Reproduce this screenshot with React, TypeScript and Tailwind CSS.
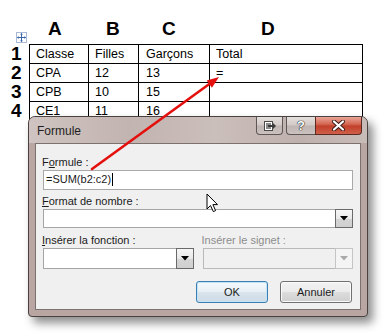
import React from "react";

function DropBtn({ disabled }: { disabled?: boolean }) {
  return (
    <div
      className={
        disabled
          ? "w-[18px] -my-px -mr-px flex items-center justify-center border border-[#c4c4c4] bg-[#f4f4f4]"
          : "w-[18px] -my-px -mr-px flex items-center justify-center border border-[#6a6a6a] bg-[linear-gradient(180deg,#f6f6f6_0%,#e9e9e9_50%,#d5d5d5_51%,#cfcfcf_100%)]"
      }
    >
      <svg width="8" height="5" viewBox="0 0 8 5">
        <path d="M0 0H8L4 4.5Z" fill={disabled ? "#a9a9a9" : "#000"} />
      </svg>
    </div>
  );
}

function Combo({ disabled, h }: { disabled?: boolean; h: string }) {
  return (
    <div
      className={
        (disabled ? "border-[#b9b9b9] bg-[#f0f0f0] " : "border-[#a5a5a5] bg-white ") +
        "flex justify-end border " +
        h
      }
    >
      <DropBtn disabled={disabled} />
    </div>
  );
}

export default function App() {
  const cols = "grid grid-cols-[59px_50px_71px_153px]";
  const rows = [
    ["Classe", "Filles", "Garçons", "Total"],
    ["CPA", "12", "13", "="],
    ["CPB", "10", "15", ""],
    ["CE1", "11", "16", ""],
  ];
  const pads = ["pl-[6px]", "pl-[6px]", "pl-[7px]", "pl-[6px]"];
  return (
    <div className="relative w-[387px] h-[335px] overflow-hidden bg-white text-black font-['Liberation_Sans',Arial,sans-serif]">
      {/* column letters */}
      <div className="flex h-[44px] pt-[19px]">
        <div className="w-[30px] shrink-0" />
        <div className={cols + " text-[19px] leading-[19px] font-bold"}>
          <div className="pl-[18px]">A</div>
          <div className="pl-[17px]">B</div>
          <div className="pl-[23px]">C</div>
          <div className="pl-[51px]">D</div>
        </div>
      </div>

      {/* table move handle */}
      <div className="absolute left-[16px] top-[32px] w-[11px] h-[11px] border border-[#a9b9d6] bg-white flex items-center justify-center">
        <svg width="9" height="9" viewBox="0 0 9 9">
          <path d="M4.5 0.5V8.5M0.5 4.5H8.5" stroke="#3a63a8" strokeWidth="1" />
          <path d="M4.5 0L3 1.6H6Z M4.5 9L3 7.4H6Z M0 4.5L1.6 3V6Z M9 4.5L7.4 3V6Z" fill="#3a63a8" />
        </svg>
      </div>

      {/* table with row numbers */}
      <div className="flex">
        <div className="w-[29px] shrink-0 text-[19px] leading-[19px] font-bold">
          {["1", "2", "3", "4"].map((n) => (
            <div key={n} className="h-[19px] pl-[11px]">
              {n}
            </div>
          ))}
        </div>
        <div className={cols + " border-l border-t border-black text-[12.5px] leading-[18px]"}>
          {rows.map((r, i) =>
            r.map((c, j) => (
              <div key={i + "-" + j} className={"h-[19px] border-r border-b border-black whitespace-nowrap " + pads[j]}>
                {c}
              </div>
            ))
          )}
        </div>
      </div>

      {/* dialog window */}
      <div className="absolute left-[28px] top-[116px] w-[340px] h-[201px] flex flex-col rounded-t-[7px] rounded-b-[4px] border border-[#4a4240] bg-[#b9a6a2] shadow-[5px_6px_10px_rgba(0,0,0,0.45)] text-[11px] leading-[14px] text-[#1b1b1b]">
        {/* title bar */}
        <div className="h-[26px] shrink-0 flex items-start justify-between rounded-t-[6px] bg-[linear-gradient(90deg,#cfc4c1_0%,#c2b4b0_30%,#cbbfbb_55%,#bfb1ad_80%,#c8bcb8_100%)]">
          <div className="pl-[8px] pt-[7px] text-[12px] leading-[14px] text-[#1e1e1e]">Formule</div>
          <div className="flex items-start mr-[5px]">
            <div className="w-[27px] h-[18px] rounded-b-[4px] border border-t-0 border-[#5f5755] bg-[linear-gradient(180deg,#e4dfdd_0%,#d3cbc8_45%,#bfb5b2_55%,#cbc2bf_100%)] flex items-center justify-center">
              <svg width="12" height="10" viewBox="0 0 12 10">
                <rect x="0.5" y="0.5" width="8" height="9" fill="#fff" stroke="#4a4a4a" />
                <rect x="2" y="2" width="5" height="6" fill="#8a8a8a" />
                <path d="M4 5H10" stroke="#3a3a3a" strokeWidth="2" />
                <path d="M9 2L12 5L9 8Z" fill="#3a3a3a" />
              </svg>
            </div>
            <div className="ml-[3px] w-[29px] h-[18px] rounded-bl-[4px] border border-t-0 border-r-0 border-[#5f5755] bg-[linear-gradient(180deg,#e4dfdd_0%,#d3cbc8_45%,#bfb5b2_55%,#cbc2bf_100%)] flex items-center justify-center text-[13px] leading-[14px] font-bold text-white [text-shadow:0_0_1px_#222,0_0_1px_#222,0_0_1px_#222]">
              ?
            </div>
            <div className="w-[47px] h-[18px] rounded-br-[4px] border border-t-0 border-[#5a2a22] bg-[linear-gradient(180deg,#e9a597_0%,#d56a55_40%,#c2402b_55%,#d0604a_100%)] flex items-center justify-center">
              <svg width="13" height="11" viewBox="0 0 13 11">
                <path d="M2 1.5L11 9.5M11 1.5L2 9.5" stroke="#3a1a16" strokeWidth="4" strokeLinecap="round" />
                <path d="M2 1.5L11 9.5M11 1.5L2 9.5" stroke="#fff" strokeWidth="2.2" strokeLinecap="round" />
              </svg>
            </div>
          </div>
        </div>

        {/* content panel */}
        <div className="mx-[6px] h-[167px] border border-[#7b7270] bg-[#f0f0f0] pl-[7px] pr-[7px]">
          <div className="mt-[11px] -ml-px">
            F<span className="underline">o</span>rmule :
          </div>
          <div className="mt-px h-[20px] border border-[#a9a9a9] bg-white pl-[2px] text-[11px] leading-[17px] flex">
            <span>=SUM(b2:c2)</span>
            <span className="ml-[1px] mt-[2px] w-px h-[13px] bg-black" />
          </div>
          <div className="mt-[4px] -ml-px">
            <span className="underline">F</span>ormat de nombre :
          </div>
          <div className="mt-px">
            <Combo h="h-[19px]" />
          </div>
          <div className="mt-[5px] grid grid-cols-2 gap-x-[9px]">
            <div className="-ml-px">
              <span className="underline">I</span>nsérer la fonction :
            </div>
            <div className="-ml-px text-[#8d8d8d]">Insérer le signet :</div>
            <div className="mt-px">
              <Combo h="h-[21px]" />
            </div>
            <div className="mt-px">
              <Combo h="h-[21px]" disabled />
            </div>
          </div>
          <div className="mt-[12px] flex justify-end gap-[12px] pr-px">
            <div className="w-[72px] h-[22px] rounded-[3px] border border-[#3c7fb1] bg-[linear-gradient(180deg,#f4f9fc_0%,#e8f0f5_50%,#d9e4ec_51%,#cfdce6_100%)] shadow-[inset_0_0_0_1px_#c3e3f7] flex items-center justify-center">
              OK
            </div>
            <div className="w-[72px] h-[22px] rounded-[3px] border border-[#707070] bg-[linear-gradient(180deg,#f2f2f2_0%,#ebebeb_50%,#dddddd_51%,#cfcfcf_100%)] shadow-[inset_0_0_0_1px_#fbfbfb] flex items-center justify-center">
              Annuler
            </div>
          </div>
        </div>
      </div>

      {/* red arrow */}
      <svg className="absolute left-0 top-0 pointer-events-none" width="387" height="335" viewBox="0 0 387 335">
        <path d="M92 169L210 83.5" stroke="#e3100e" strokeWidth="2.6" strokeLinecap="round" />
        <path d="M219 77L211.9 87.7L206.7 80.4Z" fill="#e3100e" />
      </svg>

      {/* mouse cursor */}
      <svg className="absolute left-[206px] top-[193px] pointer-events-none" width="13" height="20" viewBox="0 0 13 20">
        <path d="M1 1V16L4.5 12.5L7.3 18.6L9.6 17.6L6.9 11.6H11.5Z" fill="#fff" stroke="#000" strokeWidth="1" strokeLinejoin="round" />
      </svg>
    </div>
  );
}
